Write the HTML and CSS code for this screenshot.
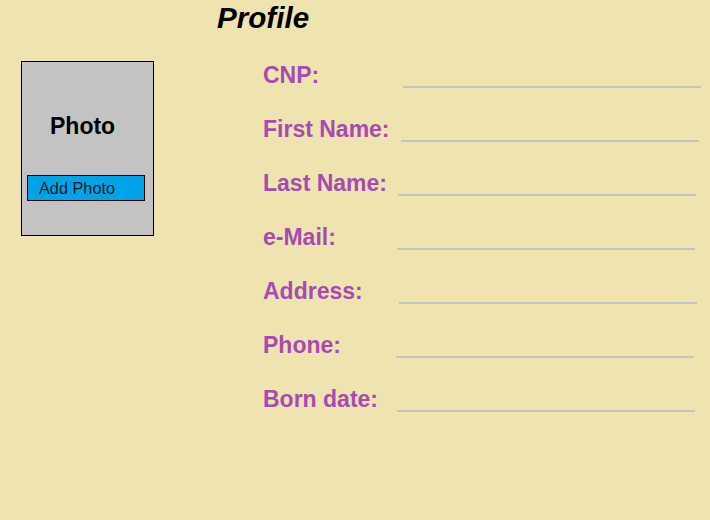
FILE: index.html
```html
<!DOCTYPE html>
<html>
<head>
<meta charset="utf-8">
<title>Profile</title>
<link rel="stylesheet" href="styles.css">
</head>
<body>
<h1 class="title">Profile</h1>
<div class="main">
  <div class="photo-card">
    <div class="photo-label">Photo</div>
    <button class="add-photo" type="button">Add Photo</button>
  </div>
  <form class="fields">
    <div class="row row-cnp"><label class="label">CNP:</label><span class="line"></span></div>
    <div class="row row-first"><label class="label">First Name:</label><span class="line"></span></div>
    <div class="row row-last"><label class="label">Last Name:</label><span class="line"></span></div>
    <div class="row row-mail"><label class="label">e-Mail:</label><span class="line"></span></div>
    <div class="row row-address"><label class="label">Address:</label><span class="line"></span></div>
    <div class="row row-phone"><label class="label">Phone:</label><span class="line"></span></div>
    <div class="row row-born"><label class="label">Born date:</label><span class="line"></span></div>
  </form>
</div>
</body>
</html>
```
FILE: styles.css
```css
html, body {
  margin: 0;
  padding: 0;
  background: #efe3b0;
  height: 100%;
  font-family: "Liberation Sans", Arial, sans-serif;
}

.title {
  margin: 0 0 0 217px;
  padding-top: 1px;
  font-size: 29.6px;
  line-height: 34px;
  font-weight: bold;
  font-style: italic;
  color: #000;
}

.main {
  display: flex;
  align-items: flex-start;
}

.photo-card {
  box-sizing: border-box;
  width: 133px;
  height: 175px;
  margin: 26px 0 0 21px;
  background: #c3c3c3;
  border: 1px solid #000;
  display: flex;
  flex-direction: column;
  align-items: flex-start;
}

.photo-label {
  margin-top: 51px;
  padding-left: 28px;
  font-size: 23px;
  line-height: 26px;
  font-weight: bold;
  color: #000;
}

.add-photo {
  box-sizing: border-box;
  margin: 36px 0 0 5px;
  width: 118px;
  height: 26px;
  padding: 0 0 0 11px;
  border: 1px solid #000;
  background: #00a2e8;
  color: #1a1a1a;
  font-family: "Liberation Sans", Arial, sans-serif;
  font-size: 16.3px;
  line-height: 24px;
  text-align: left;
}

.fields {
  margin: 13px 0 0 109px;
  display: flex;
  flex-direction: column;
}

.row {
  display: grid;
  grid-template-columns: 136px 298px;
  height: 54px;
}

.label {
  font-size: 23px;
  line-height: 54px;
  font-weight: bold;
  color: #a64bb1;
  white-space: nowrap;
}

.line {
  align-self: start;
  justify-self: start;
  width: 298px;
  margin-top: 38px;
  height: 2px;
  background: #c3c3c3;
}

.row-cnp .line { margin-left: 4px; }
.row-first .line { margin-left: 2px; }
.row-last .line { margin-left: -1px; }
.row-mail .line { margin-left: -2px; }
.row-address .line { margin-left: 0; }
.row-phone .line { margin-left: -3px; }
.row-born .line { margin-left: -2px; }
```
